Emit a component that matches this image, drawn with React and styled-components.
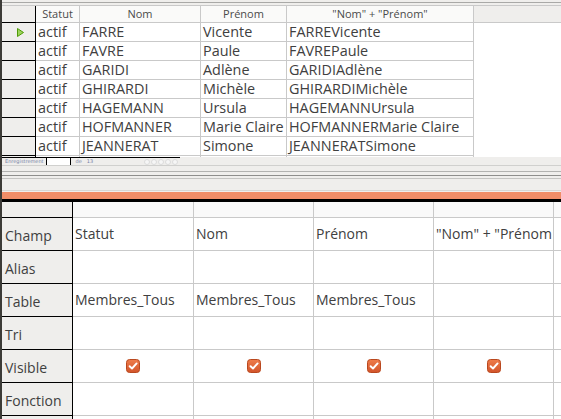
import styled, { createGlobalStyle } from "styled-components"

const GlobalStyle = createGlobalStyle`
    html, body {
        margin: 0;
        padding: 0;
        background: #ffffff;
    }
    body {
        font-family: "Open Sans", "DejaVu Sans", sans-serif;
        color: #3c3c3c;
    }
`

const records = [
    ["actif", "FARRE", "Vicente"],
    ["actif", "FAVRE", "Paule"],
    ["actif", "GARIDI", "Adlène"],
    ["actif", "GHIRARDI", "Michèle"],
    ["actif", "HAGEMANN", "Ursula"],
    ["actif", "HOFMANNER", "Marie Claire"],
    ["actif", "JEANNERAT", "Simone"],
]

const designRows = [
    { label: "Champ", cells: ["Statut", "Nom", "Prénom", "\"Nom\" + \"Prénom"] },
    { label: "Alias", cells: ["", "", "", ""] },
    { label: "Table", cells: ["Membres_Tous", "Membres_Tous", "Membres_Tous", ""] },
    { label: "Tri", cells: ["", "", "", ""] },
    { label: "Visible", check: true },
    { label: "Fonction", cells: ["", "", "", ""] },
    { label: "", cells: ["", "", "", ""] },
]

function CurrentMark() {
    return (
        <svg width="7" height="9" viewBox="0 0 7 9">
            <path d="M0.5 0.5 L6.5 4.5 L0.5 8.5 Z" fill="#9bd35a" stroke="#4e9a06" strokeWidth="1" />
        </svg>
    )
}

function CheckBox() {
    return (
        <svg width="14" height="14" viewBox="0 0 14 14">
            <defs>
                <linearGradient id="cb" x1="0" y1="0" x2="0" y2="1">
                    <stop offset="0" stopColor="#ee7d4c" />
                    <stop offset="1" stopColor="#d2542a" />
                </linearGradient>
            </defs>
            <rect x="0.5" y="0.5" width="13" height="13" rx="3" fill="url(#cb)" stroke="#b9481f" />
            <path d="M3.6 7.2 L6 9.5 L10.6 4.4" fill="none" stroke="#ffffff" strokeWidth="1.9" strokeLinecap="round" strokeLinejoin="round" />
        </svg>
    )
}

export default function App() {
    return (
        <>
            <GlobalStyle />
            <Screen>
                <LeftEdge />
                <Main>
                    <TopEdge />
                    <DataGrid>
                        <GridRow>
                            <RowHead $head />
                            <HeadCell>Statut</HeadCell>
                            <HeadCell>Nom</HeadCell>
                            <HeadCell>Prénom</HeadCell>
                            <HeadCell>"Nom" + "Prénom"</HeadCell>
                            <HeadFiller />
                        </GridRow>
                        {records.map((r, i) => (
                            <GridRow key={i} $body>
                                <RowHead>{i === 0 && <CurrentMark />}</RowHead>
                                <Cell>{r[0]}</Cell>
                                <Cell>{r[1]}</Cell>
                                <Cell>{r[2]}</Cell>
                                <Cell>{r[1] + r[2]}</Cell>
                                <BodyFiller />
                            </GridRow>
                        ))}
                        <GridRow $body>
                            <RowHead />
                            <Cell />
                            <Cell />
                            <Cell />
                            <Cell />
                            <BodyFiller />
                        </GridRow>
                    </DataGrid>
                    <NavStrip>
                        <NavBar>
                            <NavLabel>Enregistrement</NavLabel>
                            <NavInput />
                            <NavLabel $gap>de</NavLabel>
                            <NavLabel $gap>13</NavLabel>
                            <Dots>
                                {[0, 1, 2, 3, 4].map((d) => <Dot key={d} />)}
                            </Dots>
                        </NavBar>
                    </NavStrip>
                    <Splitter />
                    <AccentBar />
                    <DarkBar />
                    <Design>
                        <DesignRow $top>
                            <Label />
                            <DesignCell $top $first />
                            <DesignCell $top />
                            <DesignCell $top />
                            <DesignCell $top />
                            <DesignFiller $top />
                        </DesignRow>
                        {designRows.map((row, i) => (
                            <DesignRow key={i}>
                                <Label>{row.label}</Label>
                                {row.check
                                    ? [0, 1, 2, 3].map((c) => (
                                        <DesignCell key={c} $first={c === 0} $center>
                                            <CheckBox />
                                        </DesignCell>
                                    ))
                                    : row.cells.map((c, j) => (
                                        <DesignCell key={j} $first={j === 0}>{c}</DesignCell>
                                    ))}
                                <DesignFiller />
                            </DesignRow>
                        ))}
                    </Design>
                </Main>
            </Screen>
        </>
    )
}

const Screen = styled.div`
    display: flex;
    width: 561px;
    height: 419px;
    overflow: hidden;
`
const LeftEdge = styled.div`
    width: 2px;
    flex-shrink: 0;
    background: #3c3b37;
`
const Main = styled.div`
    flex: 1;
    min-width: 0;
    display: flex;
    flex-direction: column;
`
const TopEdge = styled.div`
    height: 5px;
    box-sizing: border-box;
    border-top: 2px solid #efeeec;
    border-bottom: 2px solid #efeeec;
    background: #a9a9a7;
`
const DataGrid = styled.div`
    height: 152px;
    overflow: hidden;
    background: #ffffff;
`
const GridRow = styled.div`
    display: grid;
    grid-template-columns: 34px 44px 121px 86px 187px 1fr;
    height: ${(p) => (p.$body ? "19px" : "18px")};
    border-top: ${(p) => (p.$body ? "none" : "1px solid #c9c9c9")};
    box-sizing: border-box;
`
const RowHead = styled.div`
    box-sizing: border-box;
    background: #efeeec;
    border-right: 1px solid #000000;
    border-bottom: 1px solid #000000;
    display: flex;
    align-items: center;
    padding-left: 15px;
`
const HeadCell = styled.div`
    box-sizing: border-box;
    background: #fafaf9;
    border-right: 1px solid #c9c9c9;
    border-bottom: 1px solid #c9c9c9;
    font-size: 11px;
    line-height: 16px;
    text-align: center;
    white-space: nowrap;
    overflow: hidden;
    color: #4a4a4a;
`
const HeadFiller = styled.div`
    background: #efeeec;
    border-bottom: 1px solid #c9c9c9;
`
const Cell = styled.div`
    box-sizing: border-box;
    border-right: 1px solid #c9c9c9;
    border-bottom: 1px solid #c9c9c9;
    font-size: 14.4px;
    line-height: 18px;
    padding-left: 2px;
    white-space: nowrap;
    overflow: hidden;
    color: #404040;
`
const BodyFiller = styled.div`
    background: #ffffff;
`
const NavStrip = styled.div`
    height: 8px;
    background: #efeeec;
    display: flex;
`
const NavBar = styled.div`
    width: 178px;
    box-sizing: border-box;
    border-top: 1px solid #000000;
    display: flex;
    align-items: center;
    padding-left: 3px;
`
const NavLabel = styled.span`
    font-family: "DejaVu Sans", sans-serif;
    font-size: 5px;
    line-height: 7px;
    color: #7883a6;
    margin-left: ${(p) => (p.$gap ? "5px" : "0")};
`
const NavInput = styled.div`
    width: 25px;
    height: 7px;
    margin-left: 2px;
    background: #ffffff;
    border-left: 1px solid #000000;
    border-right: 1px solid #000000;
    box-sizing: border-box;
`
const Dots = styled.div`
    display: flex;
    gap: 1px;
    margin-left: auto;
    margin-right: 2px;
`
const Dot = styled.div`
    width: 6px;
    height: 6px;
    border-radius: 50%;
    border: 1px solid #dcdcdc;
    box-sizing: border-box;
    background: #f6f6f6;
`
const Splitter = styled.div`
    height: 27px;
    background: linear-gradient(
        to bottom,
        #d0d0ce 0px, #d0d0ce 1px,
        #efeeec 1px, #efeeec 6px,
        #b2b2b0 6px, #b2b2b0 7px,
        #efeeec 7px, #efeeec 10px,
        #8e8e8c 10px, #8e8e8c 11px,
        #efeeec 11px, #efeeec 13px,
        #c4c4c2 13px, #c4c4c2 14px,
        #efeeec 14px, #efeeec 25px,
        #d6d6d4 25px, #d6d6d4 26px,
        #efeeec 26px
    );
`
const AccentBar = styled.div`
    height: 7px;
    background: #f08d68;
`
const DarkBar = styled.div`
    height: 3px;
    background: #000000;
`
const Design = styled.div`
    flex: 1;
    background: #ffffff;
    overflow: hidden;
`
const DesignRow = styled.div`
    display: grid;
    grid-template-columns: 71px 121px 120px 120px 120px 1fr;
    height: ${(p) => (p.$top ? "16px" : "33px")};
`
const Label = styled.div`
    box-sizing: border-box;
    background: #efeeec;
    border-right: 1px solid #000000;
    border-bottom: 1px solid #000000;
    display: flex;
    align-items: center;
    padding: 2px 0 0 3px;
    font-size: 14px;
    color: #404040;
`
const DesignCell = styled.div`
    box-sizing: border-box;
    background: ${(p) => (p.$top ? "#f9f9f9" : "#ffffff")};
    border-right: 1px solid #c9c9c9;
    border-bottom: 1px solid #c9c9c9;
    display: flex;
    align-items: center;
    justify-content: ${(p) => (p.$center ? "center" : "flex-start")};
    padding-left: ${(p) => (p.$center ? "0" : "2px")};
    padding-bottom: 1px;
    font-size: 14px;
    color: #404040;
    white-space: nowrap;
    overflow: hidden;
`
const DesignFiller = styled.div`
    box-sizing: border-box;
    background: ${(p) => (p.$top ? "#f9f9f9" : "#ffffff")};
    border-bottom: 1px solid #c9c9c9;
`
